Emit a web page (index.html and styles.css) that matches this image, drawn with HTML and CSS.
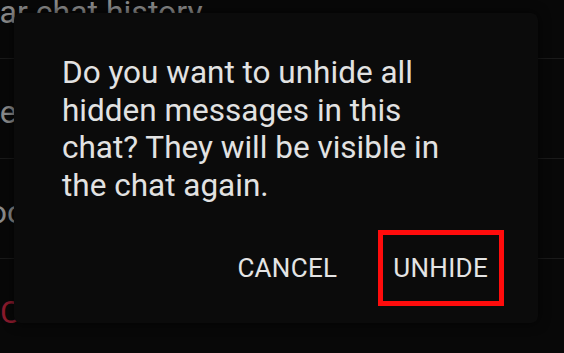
FILE: index.html
```html
<!DOCTYPE html>
<html>
<head>
<meta charset="utf-8">
<link rel="stylesheet" href="styles.css">
</head>
<body>
<div class="screen">
  <ul class="list">
    <li class="row row-clear">Clear chat history</li>
    <li class="row row-delete">Delete chat</li>
    <li class="row row-block">Block user</li>
    <li class="row row-report">Close chat</li>
  </ul>
  <div class="dialog">
    <p class="message">Do you want to unhide all hidden messages in this chat? They will be visible in the chat again.</p>
    <div class="actions">
      <button class="btn">CANCEL</button>
      <button class="btn btn-marked">UNHIDE</button>
    </div>
  </div>
</div>
</body>
</html>
```
FILE: styles.css
```css
html, body {
  margin: 0;
  padding: 0;
  background: #070707;
}
.screen {
  position: relative;
  width: 564px;
  height: 353px;
  overflow: hidden;
  font-family: Roboto, "Liberation Sans", sans-serif;
  background: #080808;
}
.list {
  list-style: none;
  margin: -41px 0 0 0;
  padding: 0;
}
.row {
  height: 100px;
  box-sizing: border-box;
  padding-top: 7px;
  display: flex;
  align-items: center;
  border-bottom: 1px solid #1a1a1a;
  font-size: 32px;
  color: #8a8a8a;
  white-space: nowrap;
}
.row-clear { text-indent: -46px; }
.row-delete { text-indent: -46px; }
.row-block { text-indent: -39px; }
.row-report { text-indent: 0; color: #8a1a2c; }

.dialog {
  position: absolute;
  left: 14px;
  top: 13px;
  width: 524px;
  height: 310px;
  box-sizing: border-box;
  background: #0b0b0b;
  border-radius: 7px;
  box-shadow: 0 0 12px rgba(0,0,0,0.7);
  padding: 41px 34px 17px 48px;
  display: flex;
  flex-direction: column;
}
.message {
  margin: 0;
  font-size: 31.5px;
  line-height: 37.5px;
  color: #e2e2e2;
  width: 405px;
}
.actions {
  margin-top: auto;
  display: flex;
  justify-content: flex-end;
  gap: 25px;
}
.btn {
  font-family: Roboto, "Liberation Sans", sans-serif;
  font-size: 26px;
  color: #e4e4e4;
  background: transparent;
  border: 5px solid transparent;
  height: 76px;
  padding: 0 11px 0 10px;
  margin: 0;
  letter-spacing: 0.3px;
}
.btn-marked {
  border-color: #ff0c0c;
}
```
